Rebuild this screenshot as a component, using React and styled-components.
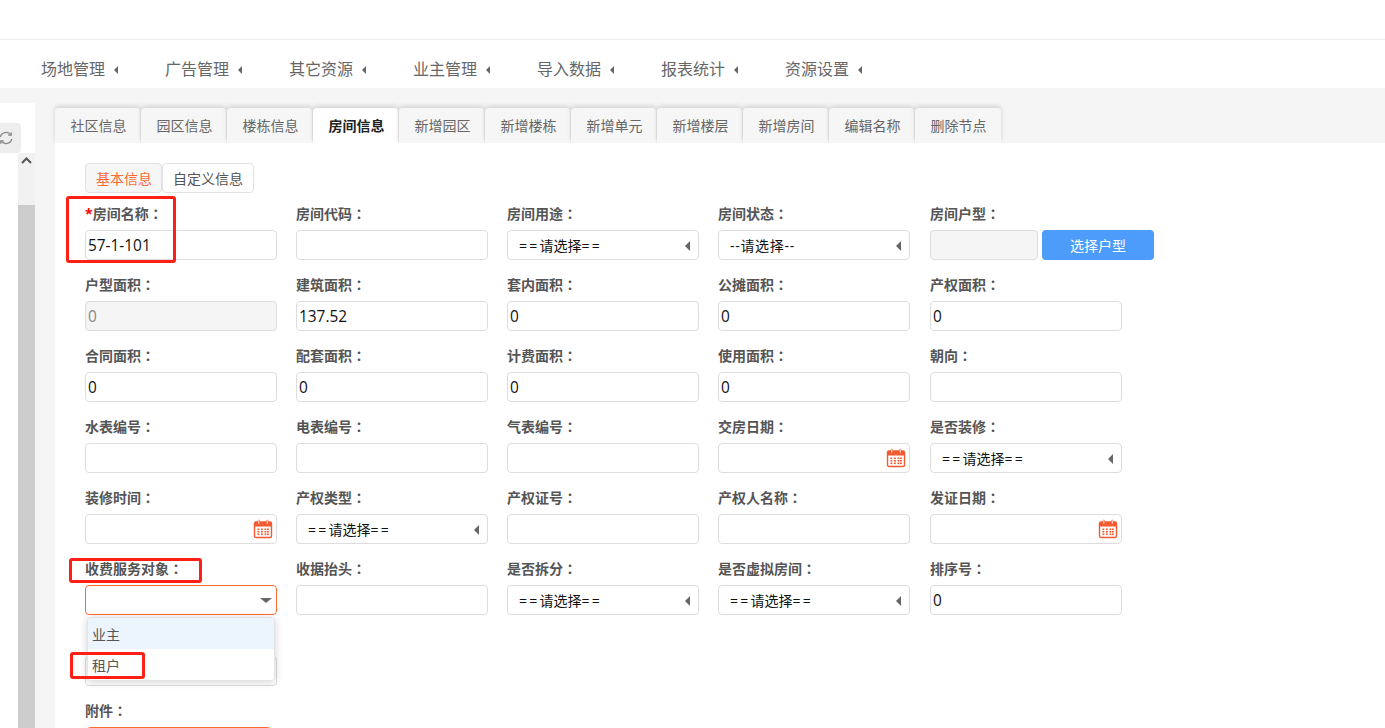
import React from 'react';
import styled, { createGlobalStyle } from 'styled-components';

const GlobalStyle = createGlobalStyle`
  html, body {
    margin: 0;
    height: 728px;
    overflow: hidden;
    background: #f5f5f5;
  }
  * {
    box-sizing: border-box;
  }
  body {
    font-family: "Open Sans", "Noto Sans CJK SC", sans-serif;
    font-size: 14px;
    color: #555;
  }
`;

const Page = styled.div`
  position: relative;
  width: 1385px;
  height: 728px;
  overflow: hidden;
`;

const TopBar = styled.div`
  height: 40px;
  background: #fff;
  border-bottom: 1px solid #eee;
`;

const Nav = styled.nav`
  height: 48px;
  background: #fff;
  display: flex;
  padding: 10px 0 0 41px;
`;

const NavItem = styled.div`
  width: 124px;
  height: 36px;
  display: flex;
  align-items: center;
  gap: 9px;
  font-size: 16px;
  color: #666;
`;

const NavCaret = styled.span`
  width: 0;
  height: 0;
  margin-top: 3px;
  border-top: 4px solid transparent;
  border-bottom: 4px solid transparent;
  border-right: 4px solid #666;
`;

const Body = styled.div`
  display: flex;
  height: 640px;
`;

const Sidebar = styled.aside`
  position: relative;
  width: 35px;
  flex: none;
  margin-top: 15px;
  background: #fff;
`;

const RefreshButton = styled.div`
  position: absolute;
  top: 20px;
  left: 0;
  width: 21px;
  height: 30px;
  background: #eee;
  border-radius: 0 4px 4px 0;
  display: flex;
  align-items: center;
  justify-content: flex-end;
  padding-right: 7px;
  overflow: hidden;
`;

const ScrollTrack = styled.div`
  position: absolute;
  top: 50px;
  left: 18px;
  bottom: 0;
  width: 17px;
  background: #f1f1f1;
  display: flex;
  flex-direction: column;
  align-items: center;
`;

const ScrollArrow = styled.div`
  height: 52px;
  padding-top: 4px;
  flex: none;
  line-height: 0;
`;

const ScrollThumb = styled.div`
  flex: 1;
  width: 100%;
  background: #ccc;
`;

const Main = styled.main`
  margin-left: 20px;
  flex: 1;
  display: flex;
  flex-direction: column;
  padding-top: 20px;
`;

const TabBar = styled.div`
  display: flex;
  gap: 1px;
  height: 35px;
  flex: none;
`;

const Tab = styled.div`
  width: 85px;
  height: 35px;
  padding: 0 0 2px 2px;
  display: flex;
  align-items: center;
  justify-content: center;
  border-radius: 4px 4px 0 0;
  background: ${({ $active }) => ($active ? '#fff' : '#f6f6f6')};
  color: ${({ $active }) => ($active ? '#222' : '#666')};
  font-weight: ${({ $active }) => ($active ? 700 : 400)};
  box-shadow: 0 -2px 5px rgba(0, 0, 0, 0.14);

  &:last-child {
    width: 86px;
    padding-right: 1px;
  }
`;

const Content = styled.section`
  position: relative;
  flex: 1;
  background: #fff;
  padding: 20px 0 0 30px;
`;

const SubTabs = styled.div`
  display: flex;
  height: 30px;
  margin-bottom: 11px;
`;

const SubTab = styled.div`
  height: 30px;
  padding: 0 ${({ $active }) => ($active ? '9px' : '10px')} 0 10px;
  display: flex;
  align-items: center;
  border: 1px solid #e2e2e2;
  border-radius: 4px;
  font-size: 14px;
  background: ${({ $active }) => ($active ? '#f6f6f6' : '#fff')};
  color: ${({ $active }) => ($active ? '#ff6a32' : '#555')};
`;

const FormGrid = styled.div`
  display: grid;
  grid-template-columns: 192px 192px 192px 193px 192px;
  column-gap: 19px;
  row-gap: 15px;
`;

const Field = styled.div`
  display: flex;
  flex-direction: column;
  height: 56px;
  grid-column: ${({ $first }) => ($first ? 1 : 'auto')};

  &:nth-child(5n + 4) {
    width: 192px;
  }
`;

const Label = styled.label`
  height: 20px;
  margin-bottom: 6px;
  line-height: 18px;
  font-weight: 700;
  font-size: 14px;
  color: #555;
`;

const Required = styled.span`
  color: #f00;
`;

// the traditional chinese face has the colon in the middle of its box, as in the picture
const Colon = styled.span`
  font-family: "Noto Sans CJK TC", sans-serif;
`;

const InputBox = styled.div`
  position: relative;
  height: 30px;
  display: flex;
  align-items: center;
  padding: 0 ${({ $select }) => ($select ? '11px' : '2px')};
  border: 1px solid ${({ $focus }) => ($focus ? '#ff6a32' : '#ddd')};
  border-radius: 4px;
  background: ${({ $disabled }) => ($disabled ? '#f5f5f5' : '#fff')};
  color: ${({ $disabled }) => ($disabled ? '#888' : '#111')};
  font-size: ${({ $select }) => ($select ? '14px' : '15.4px')};
  width: ${({ $narrow }) => ($narrow ? '108px' : '100%')};
`;

const Dashes = styled.span`
  letter-spacing: 0.7px;
`;

const Equals = styled.span`
  letter-spacing: 2.2px;
`;

const SelectCaret = styled.span`
  position: absolute;
  right: 8px;
  top: 10px;
  width: 0;
  height: 0;
  border-top: 5px solid transparent;
  border-bottom: 5px solid transparent;
  border-right: 5px solid #666;
`;

const DownCaret = styled.span`
  position: absolute;
  right: 4px;
  top: 12px;
  width: 0;
  height: 0;
  border-left: 6px solid transparent;
  border-right: 6px solid transparent;
  border-top: 5px solid #666;
`;

const CalendarSlot = styled.span`
  position: absolute;
  right: 3px;
  top: 4px;
  line-height: 0;
`;

const InlineRow = styled.div`
  display: flex;
  gap: 4px;
  width: 224px;
`;

const PrimaryButton = styled.button`
  width: 112px;
  height: 30px;
  border: 0;
  border-radius: 4px;
  background: #4d9bfb;
  color: #fff;
  font: inherit;
  font-size: 14px;
  padding: 0;
`;

const Dropdown = styled.ul`
  position: absolute;
  top: 474px;
  left: 32px;
  width: 188px;
  margin: 0;
  padding: 0;
  list-style: none;
  background: #fff;
  border: 1px solid #e4e4e4;
  border-radius: 4px;
  box-shadow: 0 1px 8px rgba(0, 0, 0, 0.18);
  overflow: hidden;
  z-index: 2;
`;

const DropdownItem = styled.li`
  height: 31px;
  line-height: 33px;
  padding-left: 4px;
  font-size: 14px;
  color: #555;
  background: ${({ $hover }) => ($hover ? '#ecf4fd' : '#fff')};
`;

const UploadButton = styled.div`
  width: 184px;
  height: 30px;
  margin-left: 2px;
  background: #ff6a32;
  border-radius: 4px;
`;

// red boxes somebody drew on the screenshot
const Annotation = styled.div`
  position: absolute;
  left: ${({ $x }) => $x}px;
  top: ${({ $y }) => $y}px;
  width: ${({ $w }) => $w}px;
  height: ${({ $h }) => $h}px;
  border: 3px solid #ff2015;
  border-radius: 3px;
  z-index: 5;
`;

const navItems = ['场地管理', '广告管理', '其它资源', '业主管理', '导入数据', '报表统计', '资源设置'];
const tabs = ['社区信息', '园区信息', '楼栋信息', '房间信息', '新增园区', '新增楼栋', '新增单元', '新增楼层', '新增房间', '编辑名称', '删除节点'];

const CHOOSE = (
  <>
    <Equals>==</Equals>请选择<Equals>==</Equals>
  </>
);
const CHOOSE_DASH = <Dashes>--请选择--</Dashes>;

const fields = [
  { label: '房间名称', required: true, value: '57-1-101' },
  { label: '房间代码' },
  { label: '房间用途', select: CHOOSE },
  { label: '房间状态', select: CHOOSE_DASH },
  { label: '房间户型', picker: true },
  { label: '户型面积', value: '0', disabled: true },
  { label: '建筑面积', value: '137.52' },
  { label: '套内面积', value: '0' },
  { label: '公摊面积', value: '0' },
  { label: '产权面积', value: '0' },
  { label: '合同面积', value: '0' },
  { label: '配套面积', value: '0' },
  { label: '计费面积', value: '0' },
  { label: '使用面积', value: '0' },
  { label: '朝向' },
  { label: '水表编号' },
  { label: '电表编号' },
  { label: '气表编号' },
  { label: '交房日期', date: true },
  { label: '是否装修', select: CHOOSE },
  { label: '装修时间', date: true },
  { label: '产权类型', select: CHOOSE },
  { label: '产权证号' },
  { label: '产权人名称' },
  { label: '发证日期', date: true },
  { label: '收费服务对象', open: true },
  { label: '收据抬头' },
  { label: '是否拆分', select: CHOOSE },
  { label: '是否虚拟房间', select: CHOOSE },
  { label: '排序号', value: '0' },
];

function CalendarIcon() {
  return (
    <svg width="20" height="20" viewBox="0 0 20 20">
      <rect x="1.5" y="3" width="17" height="15.5" rx="1.5" fill="#fff" stroke="#f4592f" strokeWidth="1.4" />
      <path d="M1.5 4.5a1.5 1.5 0 0 1 1.5-1.5h14a1.5 1.5 0 0 1 1.5 1.5V7.5h-17z" fill="#f4592f" />
      <rect x="5" y="1" width="1.6" height="4" rx="0.8" fill="#fff" stroke="#f4592f" strokeWidth="0.6" />
      <rect x="13.4" y="1" width="1.6" height="4" rx="0.8" fill="#fff" stroke="#f4592f" strokeWidth="0.6" />
      {[4.5, 8, 11.5, 14].map((x) =>
        [9.5, 12, 14.5].map((y) => (
          <rect key={`${x}-${y}`} x={x} y={y} width="1.8" height="1.6" fill="#f4592f" />
        ))
      )}
    </svg>
  );
}

function RefreshIcon() {
  return (
    <svg width="16" height="16" viewBox="0 0 16 16" fill="none" stroke="#888" strokeWidth="1.3" style={{ flex: 'none' }}>
      <path d="M2.2 7a6 6 0 0 1 10.6-2.2M13.8 9a6 6 0 0 1-10.6 2.2" />
      <path d="M13.2 2.2v3h-3M2.8 13.8v-3h3" />
    </svg>
  );
}

function FormField({ field }) {
  return (
    <Field>
      <Label>
        {field.required && <Required>*</Required>}
        {field.label}
        <Colon>：</Colon>
      </Label>
      {field.picker ? (
        <InlineRow>
          <InputBox $narrow $disabled />
          <PrimaryButton>选择户型</PrimaryButton>
        </InlineRow>
      ) : (
        <InputBox $select={!!field.select} $disabled={field.disabled} $focus={field.open}>
          {field.select || field.value}
          {field.select && <SelectCaret />}
          {field.open && <DownCaret />}
          {field.date && (
            <CalendarSlot>
              <CalendarIcon />
            </CalendarSlot>
          )}
        </InputBox>
      )}
    </Field>
  );
}

export default function App() {
  return (
    <Page>
      <GlobalStyle />
      <TopBar />
      <Nav>
        {navItems.map((item) => (
          <NavItem key={item}>
            {item}
            <NavCaret />
          </NavItem>
        ))}
      </Nav>

      <Body>
        <Sidebar>
          <RefreshButton>
            <RefreshIcon />
          </RefreshButton>
          <ScrollTrack>
            <ScrollArrow>
              <svg width="11" height="7" viewBox="0 0 11 7" fill="none" stroke="#555" strokeWidth="2">
                <path d="M1 6l4.5-4.5L10 6" />
              </svg>
            </ScrollArrow>
            <ScrollThumb />
          </ScrollTrack>
        </Sidebar>

        <Main>
          <TabBar>
            {tabs.map((tab) => (
              <Tab key={tab} $active={tab === '房间信息'}>
                {tab}
              </Tab>
            ))}
          </TabBar>

          <Content>
            <SubTabs>
              <SubTab $active>基本信息</SubTab>
              <SubTab>自定义信息</SubTab>
            </SubTabs>

            <FormGrid>
              {fields.map((field) => (
                <FormField key={field.label} field={field} />
              ))}
              <Field>
                <Label />
                <InputBox />
              </Field>
              <Field $first>
                <Label>
                  附件<Colon>：</Colon>
                </Label>
                <UploadButton />
              </Field>
            </FormGrid>

            <Dropdown>
              <DropdownItem $hover>业主</DropdownItem>
              <DropdownItem>租户</DropdownItem>
            </Dropdown>
          </Content>
        </Main>
      </Body>

      <Annotation $x={66} $y={196} $w={110} $h={67} />
      <Annotation $x={69} $y={558} $w={133} $h={25} />
      <Annotation $x={70} $y={652} $w={75} $h={27} />
    </Page>
  );
}
